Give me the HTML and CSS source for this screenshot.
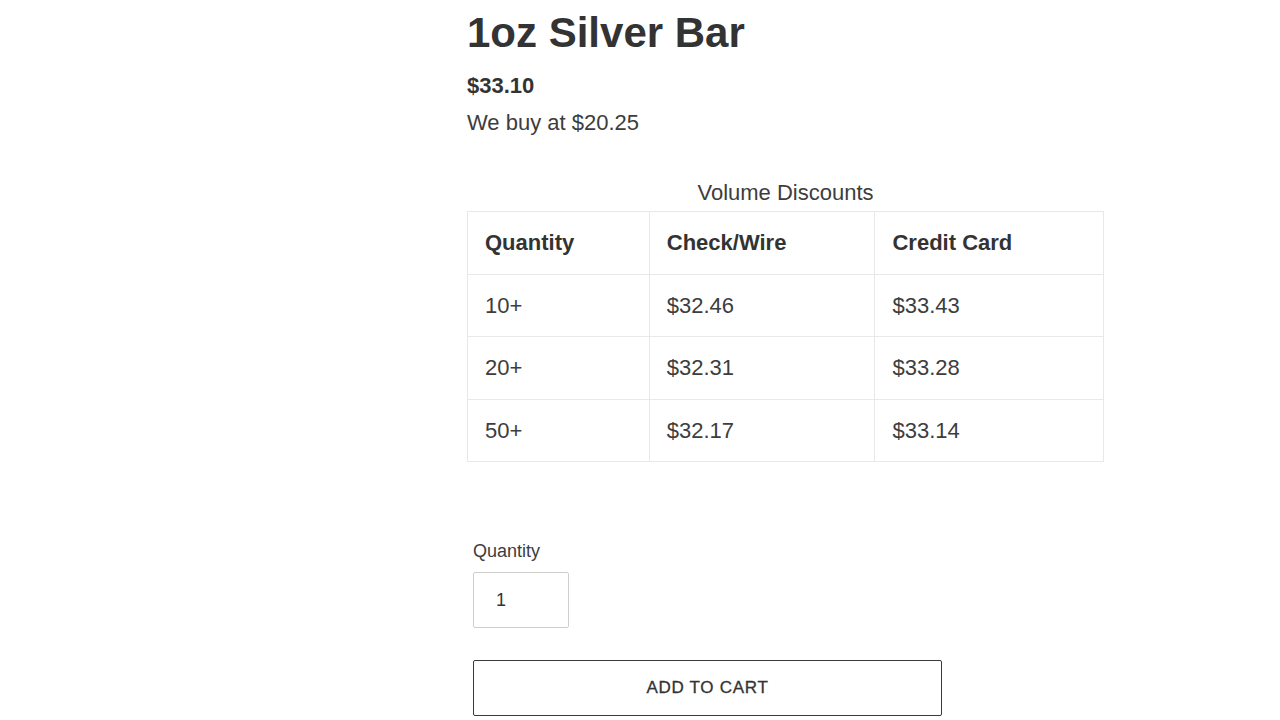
FILE: index.html
```html
<!DOCTYPE html>
<html>
    <head>
        <meta charset="utf-8">
        <title>1oz Silver Bar</title>
        <link rel="stylesheet" href="styles.css">
    </head>
    <body>
        <main class="product">
            <h1 class="product-title">1oz Silver Bar</h1>
            <p class="product-price">$33.10</p>
            <p class="product-buyback">We buy at $20.25</p>

            <table class="discounts">
                <caption>Volume Discounts</caption>
                <colgroup>
                    <col class="col-qty">
                    <col class="col-check">
                    <col class="col-card">
                </colgroup>
                <thead>
                    <tr>
                        <th>Quantity</th>
                        <th>Check/Wire</th>
                        <th>Credit Card</th>
                    </tr>
                </thead>
                <tbody>
                    <tr>
                        <td>10+</td>
                        <td>$32.46</td>
                        <td>$33.43</td>
                    </tr>
                    <tr>
                        <td>20+</td>
                        <td>$32.31</td>
                        <td>$33.28</td>
                    </tr>
                    <tr>
                        <td>50+</td>
                        <td>$32.17</td>
                        <td>$33.14</td>
                    </tr>
                </tbody>
            </table>

            <form class="cart-form">
                <label class="qty-label" for="qty">Quantity</label>
                <input class="qty-input" id="qty" type="number" value="1" min="1">
                <button class="add-btn" type="button">Add to cart</button>
            </form>
        </main>
    </body>
</html>
```

FILE: styles.css
```css
body {
    margin: 0;
    font-family: 'Liberation Sans', Arial, sans-serif;
    background-color: #fff;
    color: #3d3d3d;
}

.product {
    width: 637px;
    margin-left: 467px;
    padding-top: 8px;
}

.product-title {
    margin: 0;
    font-size: 42px;
    line-height: 50px;
    font-weight: 700;
    color: #333;
}

.product-price {
    margin: 9px 0 0;
    font-size: 22px;
    line-height: 37px;
    font-weight: 700;
    color: #333;
}

.product-buyback {
    margin: 0;
    font-size: 22px;
    line-height: 37px;
}

/* 数量割引の表 */
.discounts {
    margin-top: 34px;
    width: 637px;
    border-collapse: collapse;
    font-size: 22px;
    line-height: 33.5px;
}

.discounts caption {
    line-height: 36px;
    text-align: center;
}

.col-qty {
    width: 182px;
}

.col-check {
    width: 226px;
}

.col-card {
    width: 229px;
}

.discounts th,
.discounts td {
    border: 1px solid #e8e8e8;
    padding: 14px 17px;
    text-align: left;
}

.discounts th {
    font-weight: 700;
    color: #333;
}

/* カート */
.cart-form {
    margin: 76px 0 0 6px;
    display: flex;
    flex-direction: column;
    align-items: flex-start;
}

.qty-label {
    font-size: 18px;
    line-height: 27px;
}

.qty-input {
    margin-top: 7px;
    width: 96px;
    height: 56px;
    box-sizing: border-box;
    padding: 0 0 0 22px;
    border: 1px solid #cfcfcf;
    border-radius: 2px;
    font-family: inherit;
    font-size: 18px;
    color: #333;
    -moz-appearance: textfield;
}

.qty-input::-webkit-inner-spin-button,
.qty-input::-webkit-outer-spin-button {
    -webkit-appearance: none;
    margin: 0;
}

.add-btn {
    margin-top: 32px;
    width: 469px;
    height: 56px;
    background-color: #fff;
    border: 1px solid #3a3a3a;
    border-radius: 2px;
    font-family: inherit;
    font-size: 17px;
    letter-spacing: 0.7px;
    text-transform: uppercase;
    color: #333;
    -webkit-text-stroke: 0.3px #333;
    cursor: pointer;
}
```
